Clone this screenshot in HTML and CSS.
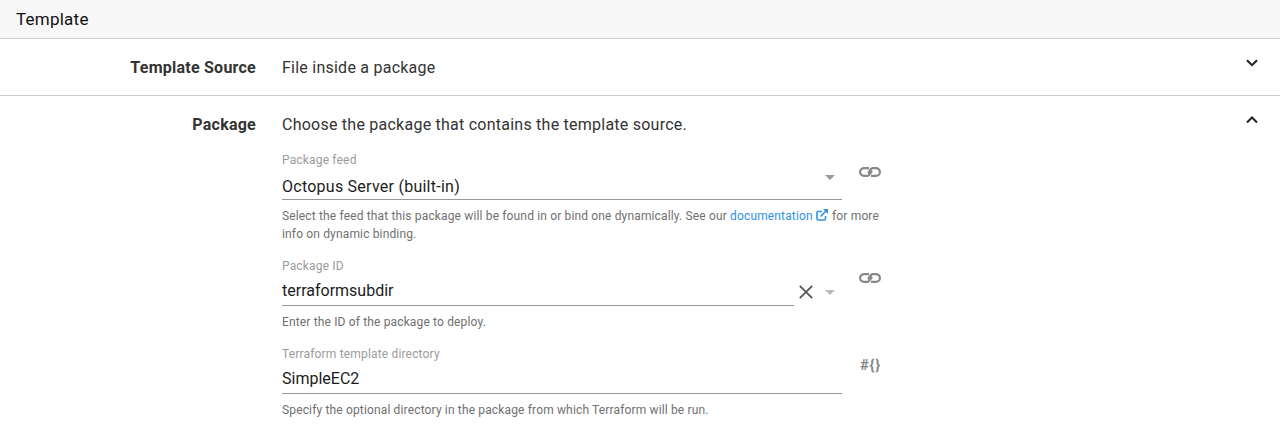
FILE: index.html
```
<!DOCTYPE html>
<html lang="en">
<head>
<meta charset="utf-8">
<title>Template</title>
<link rel="stylesheet" href="styles.css">
</head>
<body>
<h2 class="section-title">Template</h2>
<section class="row row-source">
  <div class="row-label">Template Source</div>
  <div class="row-content">File inside a package</div>
  <svg class="chevron" viewBox="0 0 12 8"><path d="M1 1.2l5 5 5-5"/></svg>
</section>
<section class="row row-package">
  <div class="row-label">Package</div>
  <div class="row-content">
    <p class="summary">Choose the package that contains the template source.</p>
    <div class="field feed">
      <div class="field-line">
        <div class="control">
          <label>Package feed</label>
          <div class="value">Octopus Server (built-in)</div>
          <span class="caret"></span>
        </div>
        <svg class="link" viewBox="0 0 22 10"><path d="M10 1.100H5a3.900 3.900 0 0 0 0 7.800h3.200c2.800 0 3.300-3.700 4.900-5.200M12 8.900H17a3.900 3.900 0 0 0 0-7.800h-3.200c-2.800 0-3.300 3.700-4.900 5.200"/></svg>
      </div>
      <p class="note">Select the feed that this package will be found in or bind one dynamically. See our <a href="#">documentation <svg class="external" viewBox="0 0 12 12"><path d="M9.500 7v2.700c0 .8-.5 1.300-1.300 1.300H2.300C1.500 11 1 10.500 1 9.700V3.800C1 3 1.500 2.500 2.300 2.500H6M4.500 7.500L10 2"/><path class="solid" d="M7 0H12v5z"/></svg></a> for more info on dynamic binding.</p>
    </div>
    <div class="field package-id">
      <div class="field-line">
        <div class="control">
          <label>Package ID</label>
          <div class="value short">terraformsubdir</div>
          <svg class="clear" viewBox="0 0 14 14"><path d="M.8.800l12.400 12.400M13.200.800L.8 13.200"/></svg>
          <span class="caret light"></span>
        </div>
        <svg class="link" viewBox="0 0 22 10"><path d="M10 1.100H5a3.900 3.900 0 0 0 0 7.800h3.200c2.800 0 3.300-3.700 4.900-5.200M12 8.900H17a3.900 3.900 0 0 0 0-7.800h-3.200c-2.800 0-3.300 3.700-4.900 5.200"/></svg>
      </div>
      <p class="note">Enter the ID of the package to deploy.</p>
    </div>
    <div class="field directory">
      <div class="field-line">
        <div class="control">
          <label>Terraform template directory</label>
          <div class="value">SimpleEC2</div>
        </div>
        <span class="variable">#{}</span>
      </div>
      <p class="note">Specify the optional directory in the package from which Terraform will be run.</p>
    </div>
  </div>
  <svg class="chevron" viewBox="0 0 12 8"><path d="M1 6.500l5-5 5 5"/></svg>
</section>
</body>
</html>
```
FILE: styles.css
```
* { box-sizing: border-box; }
body { margin: 0; background: #fff; color: #333; font: 16px/20px Roboto, sans-serif; letter-spacing: .24px; overflow: hidden; }
p { margin: 0; }
.section-title { height: 39px; margin: 0; padding: 9px 16px; background: #f7f7f7; border-bottom: 1px solid #ccc; color: #111; font-size: 17px; font-weight: 400; line-height: 20px; }
.row { display: grid; grid-template-columns: 256px 600px 1fr; column-gap: 26px; padding: 19px 22px 0 0; }
.row-source { height: 57px; border-bottom: 1px solid #ccc; }
.row-label { text-align: right; font-weight: 700; }
.chevron { width: 12px; height: 8px; justify-self: end; margin-top: 1px; fill: none; stroke: #222; stroke-width: 2; }
.field-line { display: flex; justify-content: space-between; width: 599px; }
.control { position: relative; width: 560px; }
label { display: block; color: #9b9b9b; font-size: 12px; line-height: 16px; letter-spacing: .17px; }
.value { height: 32px; padding-top: 7px; border-bottom: 1px solid #999; color: #1c1c1c; line-height: 20px; letter-spacing: 0; }
.value.short { width: 512px; }
.feed { padding-top: 17px; }
.feed .value { padding-top: 9px; letter-spacing: .25px; }
.package-id { padding-top: 15px; }
.directory { padding-top: 15px; }
.note { margin-top: 7px; color: #707070; font-size: 12px; line-height: 18px; letter-spacing: .15px; }
.note a { color: #2f93e0; text-decoration: none; }
.external { width: 12px; height: 12px; margin-right: 1px; vertical-align: -1px; fill: none; stroke: #2f93e0; stroke-width: 1.6; }
.external .solid { fill: #2f93e0; stroke: none; }
.caret { position: absolute; right: 7px; top: 23px; border: 5px solid transparent; border-top-color: #999; border-bottom: 0; }
.caret.light { top: 32px; border-top-color: #bbb; }
.clear { position: absolute; left: 517px; top: 27px; width: 14px; height: 14px; fill: none; stroke: #555; stroke-width: 1.8; }
.link { width: 22px; height: 10px; margin-top: 15px; fill: none; stroke: #888; stroke-width: 2.2; }
.variable { width: 21px; margin-top: 9px; color: #888; font-size: 15px; font-weight: 700; letter-spacing: .7px; }
```
